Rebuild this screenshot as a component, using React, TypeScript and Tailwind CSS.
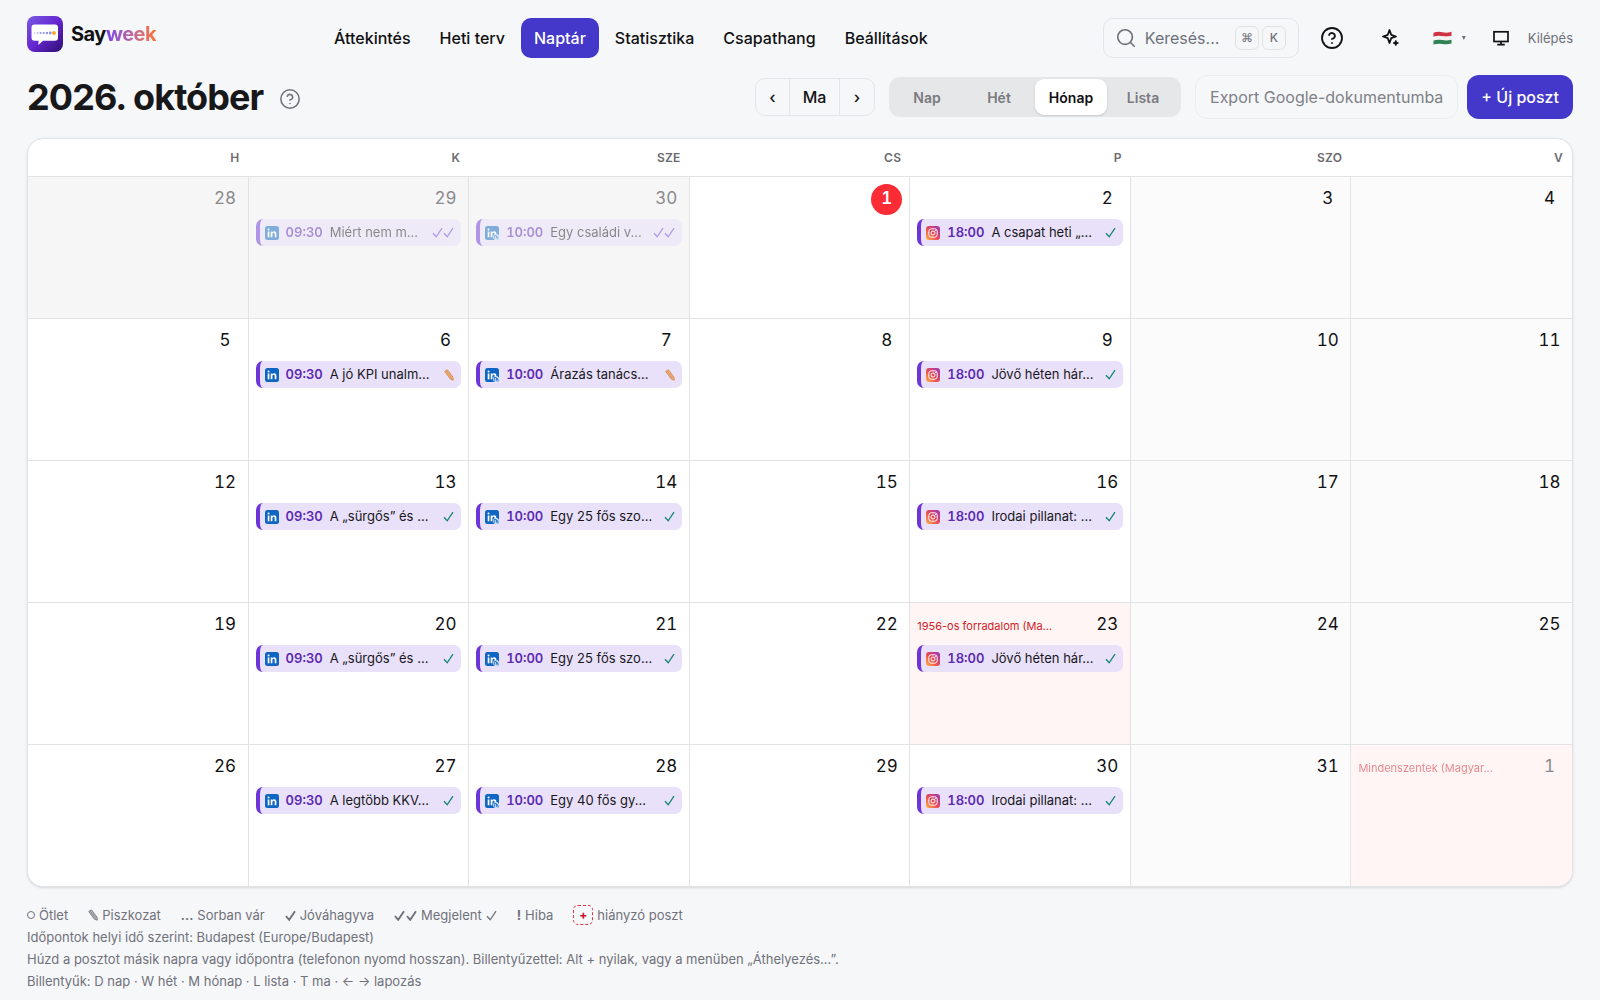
import { useId } from 'react'
import clsx from 'clsx'
import { CircleHelp, Search } from 'lucide-react'

type Network = 'linkedin' | 'linkedin-page' | 'instagram'
type Status = 'draft' | 'approved' | 'published'

interface Post {
  network: Network
  time: string
  title: string
  status: Status
}

interface Day {
  day: number
  outside?: boolean
  today?: boolean
  holiday?: string
  post?: Post
}

const NAV = ['Áttekintés', 'Heti terv', 'Naptár', 'Statisztika', 'Csapathang', 'Beállítások']
const VIEWS = ['Nap', 'Hét', 'Hónap', 'Lista']
const WEEKDAYS = ['H', 'K', 'SZE', 'CS', 'P', 'SZO', 'V']

const li = (title: string, status: Status = 'approved'): Post => ({ network: 'linkedin', time: '09:30', title, status })
const page = (title: string, status: Status = 'approved'): Post => ({ network: 'linkedin-page', time: '10:00', title, status })
const ig = (title: string): Post => ({ network: 'instagram', time: '18:00', title, status: 'approved' })

const WEEKS: Day[][] = [
  [
    { day: 28, outside: true },
    { day: 29, outside: true, post: li('Miért nem m...', 'published') },
    { day: 30, outside: true, post: page('Egy családi v...', 'published') },
    { day: 1, today: true },
    { day: 2, post: ig('A csapat heti „...') },
    { day: 3 },
    { day: 4 },
  ],
  [
    { day: 5 },
    { day: 6, post: li('A jó KPI unalm...', 'draft') },
    { day: 7, post: page('Árazás tanács...', 'draft') },
    { day: 8 },
    { day: 9, post: ig('Jövő héten hár...') },
    { day: 10 },
    { day: 11 },
  ],
  [
    { day: 12 },
    { day: 13, post: li('A „sürgős” és ...') },
    { day: 14, post: page('Egy 25 fős szo...') },
    { day: 15 },
    { day: 16, post: ig('Irodai pillanat: ...') },
    { day: 17 },
    { day: 18 },
  ],
  [
    { day: 19 },
    { day: 20, post: li('A „sürgős” és ...') },
    { day: 21, post: page('Egy 25 fős szo...') },
    { day: 22 },
    { day: 23, holiday: '1956-os forradalom (Ma...', post: ig('Jövő héten hár...') },
    { day: 24 },
    { day: 25 },
  ],
  [
    { day: 26 },
    { day: 27, post: li('A legtöbb KKV...') },
    { day: 28, post: page('Egy 40 fős gy...') },
    { day: 29 },
    { day: 30, post: ig('Irodai pillanat: ...') },
    { day: 31 },
    { day: 1, outside: true, holiday: 'Mindenszentek (Magyar...' },
  ],
]

function Logo() {
  return (
    <svg viewBox="0 0 36 36" className="size-9" aria-hidden="true">
      <defs>
        <linearGradient id="logo-bg" x1="0" y1="0" x2="1" y2="1">
          <stop offset="0" stopColor="#7a5ae6" />
          <stop offset="0.5" stopColor="#6526cf" />
          <stop offset="1" stopColor="#2c0f70" />
        </linearGradient>
      </defs>
      <rect width="36" height="36" rx="8" fill="url(#logo-bg)" />
      <path d="M7.500 8.500h20.500a3 3 0 0 1 3 3v10.200a3 3 0 0 1-3 3H16l-4.700 4.300.3-4.300H7.500a3 3 0 0 1-3-3V11.500a3 3 0 0 1 3-3z" fill="#fff" />
      <g fill="#8f8fec">
        <circle cx="7.500" cy="17" r=".6" />
        <circle cx="10.500" cy="17" r=".8" />
        <circle cx="13.500" cy="17" r="1" />
        <circle cx="16.700" cy="17" r="1.100" />
        <circle cx="20" cy="17" r="1.200" />
        <circle cx="23.300" cy="17" r="1.400" />
      </g>
      <circle cx="27" cy="17" r="1.900" fill="#f5a623" />
    </svg>
  )
}

function Sparkles() {
  return (
    <svg viewBox="0 0 20 20" className="size-5" fill="none" stroke="currentColor" strokeWidth="1.8" strokeLinejoin="round" aria-hidden="true">
      <path d="M8.500 2 L10.200 6.800 L15 8.500 L10.200 10.200 L8.500 15 L6.800 10.200 L2 8.500 L6.800 6.800 Z" />
      <path d="M14.800 12.400 L15.600 14.200 L17.400 15 L15.600 15.800 L14.800 17.600 L14 15.800 L12.200 15 L14 14.200 Z" fill="currentColor" strokeWidth="1" />
    </svg>
  )
}

function Monitor() {
  return (
    <svg viewBox="0 0 18 18" className="size-[18px]" fill="none" stroke="currentColor" strokeWidth="1.7" aria-hidden="true">
      <rect x="2" y="2.800" width="14" height="9.700" />
      <path d="M9 12.500v3M5.200 15.600h7.600" />
    </svg>
  )
}

function Flag() {
  return (
    <svg viewBox="0 0 19 14" className="h-3.5 w-[19px]" aria-hidden="true">
      <path d="M.5 1.800Q5 .2 9.500 1.300T18.500.7V5Q14 6.200 9.500 5.300T.5 6z" fill="#cf3341" />
      <path d="M.5 5.700Q5 4.300 9.500 5.200T18.500 4.800V9Q14 10.200 9.500 9.300T.5 10z" fill="#f3f3f3" />
      <path d="M.5 9.600Q5 8.200 9.500 9.100T18.500 8.700V12.500Q14 13.600 9.500 12.900T.5 13.500z" fill="#2f8052" />
    </svg>
  )
}

function Pencil({ className }: { className?: string }) {
  return (
    <svg viewBox="0 0 10 12" className={clsx('h-3 w-2.5 shrink-0', className)} aria-hidden="true">
      <path d="M.8 2.600Q1.600.8 3.600 1L9 8.200 9.200 11.200 6.400 10.200z" fill="currentColor" fillOpacity=".5" stroke="currentColor" strokeWidth=".8" strokeLinejoin="round" />
      <path d="M2.200 1.800 7.700 9.200" stroke="currentColor" strokeWidth=".6" />
    </svg>
  )
}

function Check({ className, bold }: { className?: string; bold?: boolean }) {
  return (
    <svg viewBox="0 0 11 11" className={clsx('size-[11px] shrink-0', className)} fill="none" stroke="currentColor" strokeWidth={bold ? 1.9 : 1.3} aria-hidden="true">
      <path d="M1 6.200 4.200 9.800 10 1.200" />
    </svg>
  )
}

function NetworkIcon({ network }: { network: Network }) {
  const id = useId()
  if (network === 'instagram') {
    return (
      <svg viewBox="0 0 14 14" className="size-3.5 shrink-0" aria-label="Instagram">
        <defs>
          <linearGradient id={id} x1="0" y1="1" x2="1" y2="0">
            <stop offset="0" stopColor="#fdb94a" />
            <stop offset="0.45" stopColor="#ec4a4f" />
            <stop offset="1" stopColor="#9a35c0" />
          </linearGradient>
        </defs>
        <rect width="14" height="14" rx="3" fill={`url(#${id})`} />
        <rect x="2.800" y="2.800" width="8.400" height="8.400" rx="2.500" fill="none" stroke="#fff" />
        <circle cx="7" cy="7" r="2" fill="none" stroke="#fff" />
        <circle cx="9.400" cy="4.600" r=".6" fill="#fff" />
      </svg>
    )
  }
  return (
    <svg viewBox="0 0 14 14" className="size-3.5 shrink-0" aria-label="LinkedIn">
      <rect width="14" height="14" rx="2.500" fill="#0f66c2" />
      <path d="M2.700 5.500h1.700v5.800H2.700z" fill="#fff" />
      <circle cx="3.550" cy="3.600" r="1" fill="#fff" />
      <path d="M5.700 5.500h1.600v.8c.4-.6 1-1 1.900-1 1.500 0 2.200 1 2.200 2.700v3.300H9.700V8.300c0-.9-.3-1.500-1.100-1.500s-1.200.6-1.200 1.500v3H5.700z" fill="#fff" />
      {network === 'linkedin-page' && (
        <>
          <circle cx="11" cy="11" r="3" fill="#d9e7f8" />
          <path d="M9.300 12.800V9.400h2v3.400M11.300 10.800h1.600v2" fill="none" stroke="#0f66c2" strokeWidth=".9" />
        </>
      )}
    </svg>
  )
}

function StatusMark({ status }: { status: Status }) {
  if (status === 'draft') return <Pencil className="text-[#e0822b]" />
  if (status === 'approved') return <Check className="text-[#12866f]" />
  return (
    <span className="flex text-[#6a3fe0]">
      <Check />
      <Check />
    </span>
  )
}

function PostChip({ post, faded }: { post: Post; faded?: boolean }) {
  return (
    <button
      type="button"
      className={clsx(
        'flex h-[27px] w-full items-center gap-[7px] rounded-[7px] border-l-4 border-[#6d35d8] bg-[#e9e0fa] pr-[7px] pl-[5px] text-left text-[13px]',
        faded && 'opacity-50',
      )}
    >
      <NetworkIcon network={post.network} />
      <span className="font-semibold text-[#5b2bb0] tabular-nums">{post.time}</span>
      <span className="min-w-0 flex-1 whitespace-nowrap text-[#18181b]">{post.title}</span>
      <StatusMark status={post.status} />
    </button>
  )
}

function DayCell({ day, weekend }: { day: Day; weekend: boolean }) {
  return (
    <td
      className={clsx(
        'h-[142px] border-t border-r border-[#e2e3e5] px-[7px] pt-[7px] align-top last:border-r-0',
        day.holiday ? 'bg-[#fff5f5]' : day.outside ? 'bg-[#f6f6f6]' : weekend ? 'bg-[#fbfbfb]' : 'bg-white',
      )}
    >
      <div className="flex h-[35px] items-start justify-between">
        <span className={clsx('pt-1.5 text-[11px] leading-5 whitespace-nowrap text-[#d01c28]', day.outside && 'opacity-50')}>{day.holiday}</span>
        <span
          className={clsx(
            'flex h-[31px] min-w-[31px] items-center justify-center rounded-full pb-0.5 text-[17px] tabular-nums',
            day.today ? 'bg-[#fb2c36] font-semibold text-white' : day.outside ? 'text-[#8b8b8e]' : 'text-[#111113]',
          )}
        >
          {day.day}
        </span>
      </div>
      {day.post && <PostChip post={day.post} faded={day.outside} />}
    </td>
  )
}

function TopBar() {
  return (
    <header className="flex items-start pt-4">
      <a href="#" className="flex w-[294px] items-center gap-2 text-[20px] font-bold tracking-tight">
        <Logo />
        <span>
          Say
          <span className="bg-linear-to-r from-[#7c3aed] to-[#ff6f1f] bg-clip-text text-transparent">week</span>
        </span>
      </a>
      <nav className="flex gap-[3px] pt-0.5">
        {NAV.map((item) => (
          <a
            key={item}
            href="#"
            className={clsx('flex h-10 items-center rounded-[10px] px-[13px] text-[16px] font-medium', item === 'Naptár' && 'bg-[#4338ca] text-white')}
          >
            {item}
          </a>
        ))}
      </nav>
      <div className="ml-auto flex items-center pt-0.5">
        <label className="flex h-10 w-[196px] items-center rounded-[10px] border border-[#e4e5e8] pr-3 pl-[11px] text-[#71717a]">
          <Search className="size-[22px] shrink-0" strokeWidth={1.8} />
          <input
            type="search"
            aria-label="Keresés"
            placeholder="Keresés..."
            className="ml-2 min-w-0 flex-1 bg-transparent text-[16px] outline-none placeholder:text-[#71717a]"
          />
          <kbd className="flex h-6 w-6 items-center justify-center rounded-md border border-[#e2e3e5] font-sans text-[12px] font-medium">⌘</kbd>
          <kbd className="ml-[3px] flex h-6 w-6 items-center justify-center rounded-md border border-[#e2e3e5] font-[Inter] text-[12px] font-medium">K</kbd>
        </label>
        <button type="button" aria-label="Súgó" className="ml-[21px]">
          <CircleHelp className="size-6" strokeWidth={1.8} />
        </button>
        <button type="button" aria-label="Újdonságok" className="ml-[37px]">
          <Sparkles />
        </button>
        <button type="button" aria-label="Nyelv" className="ml-8 flex items-center gap-2.5">
          <Flag />
          <span className="size-1 bg-[#71717a] [clip-path:polygon(0_0,100%_0,50%_100%)]" />
        </button>
        <button type="button" aria-label="Téma" className="ml-[26px]">
          <Monitor />
        </button>
        <a href="#" className="ml-[18px] pt-0.5 text-[13px] text-[#71717a]">
          Kilépés
        </a>
      </div>
    </header>
  )
}

function Toolbar() {
  return (
    <div className="flex items-center justify-between pt-[17px]">
      <div className="flex items-center gap-4">
        <h1 className="text-[36px] leading-[42px] font-bold tracking-tight text-[#18181b]">2026. október</h1>
        <button type="button" aria-label="Súgó a naptárhoz" className="pt-1 text-[#71717a]">
          <CircleHelp className="size-[22px]" strokeWidth={1.7} />
        </button>
      </div>
      <div className="flex items-center">
        <div className="flex h-[38px] divide-x divide-[#e4e5e8] rounded-[10px] border border-[#e4e5e8] text-[16px] font-medium">
          <button type="button" aria-label="Előző" className="w-[34px]">‹</button>
          <button type="button" className="w-[50px]">Ma</button>
          <button type="button" aria-label="Következő" className="w-[34px]">›</button>
        </div>
        <div className="ml-3.5 flex h-10 rounded-[11px] bg-[#e6e7e9] p-0.5 text-[14px] font-semibold text-[#7a7a80]">
          {VIEWS.map((view) => (
            <button key={view} type="button" className={clsx('w-[72px] rounded-[9px]', view === 'Hónap' && 'bg-white text-[#111113] shadow-sm')}>
              {view}
            </button>
          ))}
        </div>
        <button type="button" className="ml-3.5 h-11 rounded-xl border border-[#ededf0] px-3.5 text-[16px] text-[#808086]">
          Export Google-dokumentumba
        </button>
        <button type="button" className="ml-[9px] h-11 rounded-xl bg-[#4338ca] px-3.5 text-[16px] font-medium text-white">
          + Új poszt
        </button>
      </div>
    </div>
  )
}

function Legend() {
  return (
    <footer className="pt-[17px] text-[13px] leading-[22px] text-[#71717a]">
      <div className="flex gap-5">
        <span className="flex items-center gap-1">
          <span className="size-2 rounded-full border border-[#71717a]" />
          Ötlet
        </span>
        <span className="flex items-center gap-1">
          <Pencil />
          Piszkozat
        </span>
        <span className="flex gap-1">
          <b className="font-semibold">...</b>
          Sorban vár
        </span>
        <span className="flex items-center gap-1">
          <Check bold />
          Jóváhagyva
        </span>
        <span className="flex items-center gap-1">
          <span className="flex gap-px">
            <Check bold />
            <Check bold />
          </span>
          Megjelent
          <Check />
        </span>
        <span className="flex gap-1">
          <b className="font-bold">!</b>
          Hiba
        </span>
        <span className="flex items-center gap-1">
          <span className="flex h-5 w-5 items-center justify-center rounded-[5px] border border-dashed border-[#dc3545] text-[12px] font-bold text-[#c8102e]">+</span>
          hiányzó poszt
        </span>
      </div>
      <p>Időpontok helyi idő szerint: Budapest (Europe/Budapest)</p>
      <p>Húzd a posztot másik napra vagy időpontra (telefonon nyomd hosszan). Billentyűzettel: Alt + nyilak, vagy a menüben „Áthelyezés...”.</p>
      <p>Billentyűk: D nap · W hét · M hónap · L lista · T ma · ← → lapozás</p>
    </footer>
  )
}

export default function App() {
  return (
    <div className="min-h-screen bg-[#f5f7f9] px-[27px] pb-1.5 font-[Inter,sans-serif] text-[#111113]">
      <TopBar />
      <Toolbar />
      <main className="mt-[19px] overflow-hidden rounded-2xl border border-[#e2e3e5] bg-white shadow-sm">
        <table className="w-full table-fixed border-separate border-spacing-0">
          <thead>
            <tr>
              {WEEKDAYS.map((name) => (
                <th key={name} className="h-[37px] pr-[9px] text-right text-[12px] font-semibold tracking-wide text-[#6b6b70]">
                  {name}
                </th>
              ))}
            </tr>
          </thead>
          <tbody>
            {WEEKS.map((week, w) => (
              <tr key={w}>
                {week.map((day, d) => (
                  <DayCell key={d} day={day} weekend={d > 4} />
                ))}
              </tr>
            ))}
          </tbody>
        </table>
      </main>
      <Legend />
    </div>
  )
}
